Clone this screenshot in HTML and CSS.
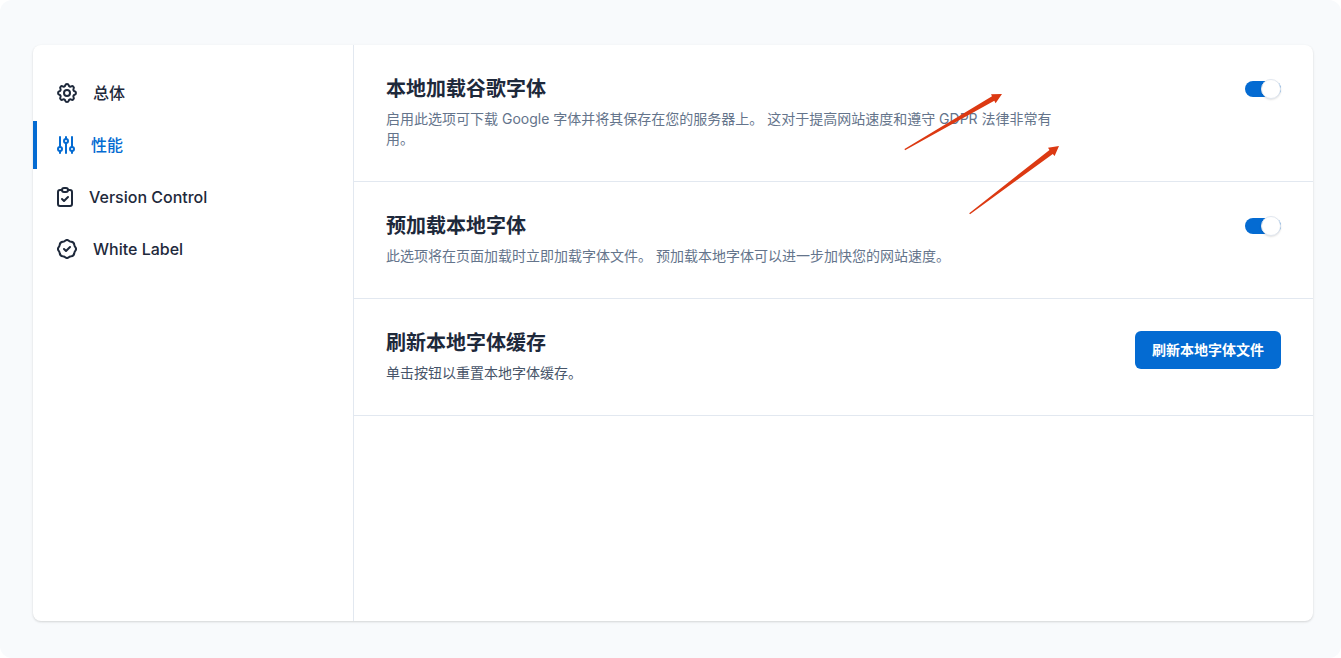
FILE: index.html
```html
<!DOCTYPE html>
<html lang="zh-CN">
<head>
<meta charset="utf-8">
<meta name="viewport" content="width=device-width, initial-scale=1">
<title>性能</title>
<link rel="stylesheet" href="styles.css">
</head>
<body>
<div class="page">
  <div class="card">
    <nav class="sidebar">
      <a class="nav-item" href="#general">
        <svg width="20" height="20" viewBox="0 0 20 20" class="icon"><path d="M8.3 2.3C8.7.6 11.3.6 11.7 2.3A1.75 1.75 0 0 0 14.3 3.4C15.8 2.5 17.5 4.2 16.6 5.7A1.75 1.75 0 0 0 17.7 8.3C19.4 8.7 19.4 11.3 17.7 11.7A1.75 1.75 0 0 0 16.6 14.3C17.5 15.8 15.8 17.5 14.3 16.6A1.75 1.75 0 0 0 11.7 17.7C11.3 19.4 8.7 19.4 8.3 17.7A1.75 1.75 0 0 0 5.7 16.6C4.2 17.5 2.5 15.8 3.4 14.3A1.75 1.75 0 0 0 2.3 11.7C.6 11.3.6 8.7 2.3 8.3A1.75 1.75 0 0 0 3.4 5.7C2.5 4.2 4.2 2.5 5.7 3.4A1.75 1.75 0 0 0 8.3 2.3Z"/><circle cx="10" cy="10" r="3"/></svg>
        <span>总体</span>
      </a>
      <a class="nav-item active" href="#performance" aria-current="page">
        <svg width="18" height="18" viewBox="0 0 18 18" class="icon"><path d="M3 1v10M3 15v2M9 1v2M9 7v10M15 1v10M15 15v2"/><circle cx="3" cy="13" r="2"/><circle cx="9" cy="5" r="2"/><circle cx="15" cy="13" r="2"/></svg>
        <span>性能</span>
      </a>
      <a class="nav-item" href="#version">
        <svg width="16" height="20" viewBox="0 0 16 20" class="icon"><path d="M5 3H3a2 2 0 0 0-2 2v12a2 2 0 0 0 2 2h10a2 2 0 0 0 2-2V5a2 2 0 0 0-2-2h-2"/><rect x="5" y="1" width="6" height="4" rx="2"/><path d="M5 12l2 2 4-4"/></svg>
        <span>Version Control</span>
      </a>
      <a class="nav-item" href="#label">
        <svg width="20" height="20" viewBox="0 0 20 20" class="icon"><path d="M7 10l2 2 4-4M5.8 2.7a3.4 3.4 0 0 0 2-.8 3.4 3.4 0 0 1 4.400 0 3.400 3.400 0 0 0 2 .8 3.400 3.400 0 0 1 3.100 3.100 3.400 3.400 0 0 0 .8 2 3.400 3.400 0 0 1 0 4.400 3.400 3.400 0 0 0-.8 2 3.400 3.400 0 0 1-3.100 3.100 3.400 3.400 0 0 0-2 .8 3.400 3.400 0 0 1-4.400 0 3.400 3.400 0 0 0-2-.8 3.400 3.400 0 0 1-3.100-3.100 3.400 3.400 0 0 0-.8-2 3.400 3.400 0 0 1 0-4.400 3.400 3.400 0 0 0 .8-2 3.400 3.400 0 0 1 3.100-3.100z"/></svg>
        <span>White Label</span>
      </a>
    </nav>
    <main class="content">
      <section class="row">
        <div class="text">
          <h2><label for="local-fonts">本地加载谷歌字体</label></h2>
          <p id="local-desc">启用此选项可下载 Google 字体并将其保存在您的服务器上。 这对于提高网站速度和遵守 GDPR 法律非常有用。</p>
        </div>
        <input class="switch" type="checkbox" role="switch" id="local-fonts" aria-describedby="local-desc" checked>
      </section>
      <section class="row">
        <div class="text">
          <h2><label for="preload-fonts">预加载本地字体</label></h2>
          <p id="preload-desc">此选项将在页面加载时立即加载字体文件。 预加载本地字体可以进一步加快您的网站速度。</p>
        </div>
        <input class="switch" type="checkbox" role="switch" id="preload-fonts" aria-describedby="preload-desc" checked>
      </section>
      <section class="row">
        <div class="text">
          <h2>刷新本地字体缓存</h2>
          <p class="dark">单击按钮以重置本地字体缓存。</p>
        </div>
        <button class="button" type="button">刷新本地字体文件</button>
      </section>
    </main>
  </div>
  <svg class="arrows" width="156" height="122" viewBox="904 93 156 122" aria-hidden="true"><path d="M904.500 149L992 96.200 991 94.200 1002 94 995.600 103.200 994.300 100.800 905 150.200ZM969.200 213.200L1049.500 150 1048 147.800 1059 146 1054.600 156 1052.800 154 970 214.200Z"/></svg>
</div>
</body>
</html>
```
FILE: styles.css
```css
*,
*::before {
  box-sizing: border-box;
}

body {
  margin: 0;
  background: #fff;
  color: #1e293b;
  font-family: Inter, "Noto Sans CJK SC", sans-serif;
}

.page {
  position: relative;
  display: flex;
  min-height: 100vh;
  padding: 45px 28px 37px 33px;
  border-radius: 12px;
  background: #f8fafc;
}

.card {
  display: flex;
  flex: 1;
  border-radius: 8px;
  background: #fff;
  box-shadow: 0 1px 3px rgba(0, 0, 0, 0.1), 0 1px 2px rgba(0, 0, 0, 0.06);
}

.sidebar {
  display: flex;
  flex: 0 0 321px;
  flex-direction: column;
  gap: 4px;
  padding: 24px 0;
  border-right: 1px solid #e2e8f0;
}

.nav-item {
  display: flex;
  align-items: center;
  gap: 16px;
  height: 48px;
  padding-left: 20px;
  border-left: 4px solid transparent;
  color: #1e293b;
  font-size: 16px;
  font-weight: 500;
  line-height: 24px;
  text-decoration: none;
}

.nav-item.active {
  border-left-color: #046bd2;
  color: #046bd2;
}

.icon {
  fill: none;
  stroke: currentColor;
  stroke-width: 2;
  stroke-linecap: round;
  stroke-linejoin: round;
}

.content {
  flex: 1;
  min-width: 0;
}

.row {
  display: flex;
  align-items: flex-start;
  justify-content: space-between;
  padding: 32px;
  border-bottom: 1px solid #e2e8f0;
}

.text {
  width: 75%;
}

h2 {
  margin: 0 0 8px;
  font-size: 20px;
  font-weight: 600;
  line-height: 24px;
}

p {
  margin: 0;
  color: #64748b;
  font-size: 14px;
  line-height: 20px;
}

p.dark {
  color: #475569;
}

.switch {
  display: flex;
  align-items: center;
  justify-content: flex-end;
  width: 36px;
  height: 16px;
  margin: 4px 0;
  border-radius: 8px;
  appearance: none;
  background: #046bd2;
  cursor: pointer;
}

.switch::before {
  flex: none;
  width: 20px;
  height: 20px;
  border: 1px solid #e2e8f0;
  border-radius: 50%;
  background: #fff;
  box-shadow: 0 1px 2px rgba(0, 0, 0, 0.12);
  content: "";
}

.switch:not(:checked) {
  justify-content: flex-start;
  background: #e2e8f0;
}

.button {
  padding: 9px 17px;
  border: 0;
  border-radius: 6px;
  background: #046bd2;
  color: #fff;
  font: inherit;
  font-size: 14px;
  font-weight: 600;
  line-height: 20px;
  cursor: pointer;
}

.arrows {
  position: absolute;
  top: 93px;
  left: 904px;
  fill: #dc3912;
  pointer-events: none;
}
```
